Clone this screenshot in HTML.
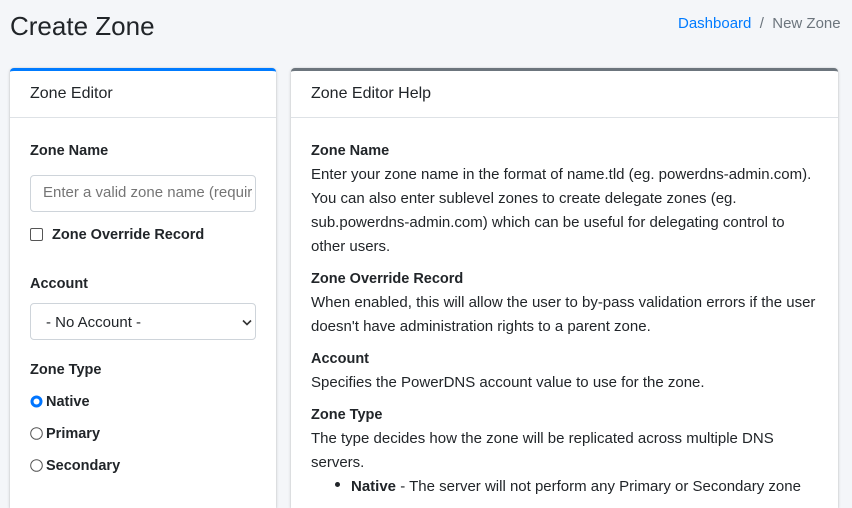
<!DOCTYPE html>
<html><head><meta charset="utf-8"><style>
*{box-sizing:border-box;margin:0;padding:0}
body{width:852px;height:498px;overflow:hidden;background:#f4f6f9;font-family:"Liberation Sans",sans-serif;color:#212529;position:relative}
.a{position:absolute;white-space:nowrap}
.card{position:absolute;background:#fff;border-radius:4px 4px 0 0;box-shadow:0 0 1px rgba(0,0,0,.15),0 1px 3px rgba(0,0,0,.2)}
.hd{position:absolute;left:0;right:0;top:0;height:47px;border-bottom:1px solid #dee2e6}
.b{font-weight:bold}
.t{font-size:15px}
.l{font-size:14.5px}
</style></head><body>
<div class="a" style="left:10px;top:11px;font-size:26px;color:#212529">Create Zone</div>
<div class="a" style="left:678px;top:15px;font-size:15px"><span style="color:#007bff">Dashboard</span> <span style="color:#6c757d">&nbsp;/&nbsp; New Zone</span></div>

<div class="card" style="left:10px;top:68px;width:266px;height:440px;border-top:3px solid #007bff">
<div class="hd"></div>
<div class="a" style="left:20px;top:14px;font-size:16px">Zone Editor</div>
<div class="a b l" style="left:20px;top:72px">Zone Name</div>
<div style="position:absolute;left:20px;top:104px;width:226px;height:37px;border:1px solid #ced4da;border-radius:4px"></div>
<div class="a t" style="left:33px;top:113px;color:#757575;width:210px;overflow:hidden">Enter a valid zone name (required)</div>
<div style="position:absolute;left:20px;top:157px;width:13px;height:13px;border:1px solid #555;border-radius:2px"></div>
<div class="a b l" style="left:42px;top:156px">Zone Override Record</div>
<div class="a b l" style="left:20px;top:205px">Account</div>
<div style="position:absolute;left:20px;top:232px;width:226px;height:37px;border:1px solid #ced4da;border-radius:4px"></div>
<div class="a t" style="left:36px;top:243px">- No Account -</div>
<svg class="a" style="left:232px;top:248px" width="10" height="7"><path d="M1 1.5L5 5.5L9 1.5" fill="none" stroke="#333" stroke-width="1.6"/></svg>
<div class="a b l" style="left:20px;top:291px">Zone Type</div>
<svg class="a" style="left:20px;top:324px" width="13" height="13"><circle cx="6.5" cy="6.5" r="6" fill="#0075ff"/><circle cx="6.5" cy="6.5" r="3" fill="#fff"/></svg>
<div class="a b l" style="left:36px;top:323px">Native</div>
<svg class="a" style="left:20px;top:356px" width="13" height="13"><circle cx="6.5" cy="6.5" r="5.8" fill="#fff" stroke="#555"/></svg>
<div class="a b l" style="left:36px;top:355px">Primary</div>
<svg class="a" style="left:20px;top:388px" width="13" height="13"><circle cx="6.5" cy="6.5" r="5.8" fill="#fff" stroke="#555"/></svg>
<div class="a b l" style="left:36px;top:387px">Secondary</div>
</div>

<div class="card" style="left:291px;top:68px;width:547px;height:440px;border-top:3px solid #6c757d">
<div class="hd"></div>
<div class="a" style="left:20px;top:14px;font-size:16px">Zone Editor Help</div>
<div class="a b l" style="left:20px;top:72px">Zone Name</div>
<div class="a t" style="left:20px;top:95px">Enter your zone name in the format of name.tld (eg. powerdns-admin.com).</div>
<div class="a t" style="left:20px;top:119px">You can also enter sublevel zones to create delegate zones (eg.</div>
<div class="a t" style="left:20px;top:143px">sub.powerdns-admin.com) which can be useful for delegating control to</div>
<div class="a t" style="left:20px;top:167px">other users.</div>
<div class="a b l" style="left:20px;top:200px">Zone Override Record</div>
<div class="a t" style="left:20px;top:223px">When enabled, this will allow the user to by-pass validation errors if the user</div>
<div class="a t" style="left:20px;top:247px">doesn't have administration rights to a parent zone.</div>
<div class="a b l" style="left:20px;top:280px">Account</div>
<div class="a t" style="left:20px;top:303px">Specifies the PowerDNS account value to use for the zone.</div>
<div class="a b l" style="left:20px;top:336px">Zone Type</div>
<div class="a t" style="left:20px;top:359px">The type decides how the zone will be replicated across multiple DNS</div>
<div class="a t" style="left:20px;top:383px">servers.</div>
<div class="a" style="left:44px;top:411px;width:5px;height:5px;border-radius:50%;background:#212529"></div>
<div class="a t" style="left:60px;top:407px"><b>Native</b> - The server will not perform any Primary or Secondary zone</div>
</div>
</body></html>
